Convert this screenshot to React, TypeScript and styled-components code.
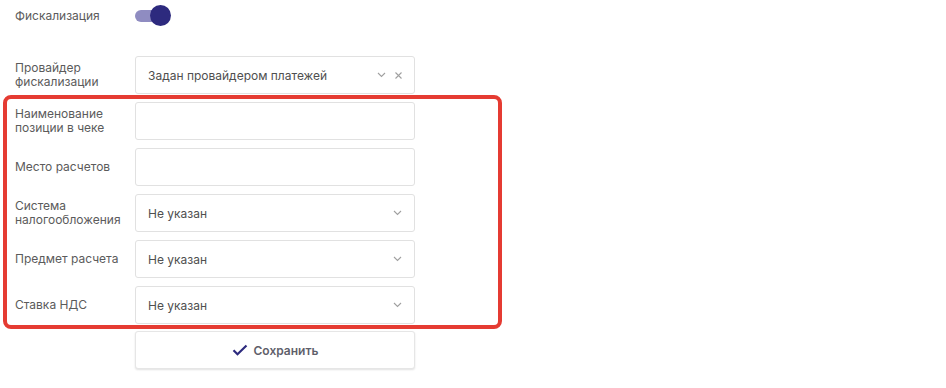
import React, { useState } from "react";
import styled, { createGlobalStyle } from "styled-components";

const GlobalStyle = createGlobalStyle`
  body {
    margin: 0;
    background: #ffffff;
    font-family: Inter, "Noto Sans", sans-serif;
  }
`;

const Page = styled.div`
  display: flex;
  flex-direction: column;
  padding: 6px 0 0 15px;
  width: 946px;
  height: 388px;
  box-sizing: border-box;
`;

const Row = styled.div<{ $mt?: number }>`
  display: grid;
  grid-template-columns: 120px 280px;
  align-items: center;
  min-height: 38px;
  margin-top: ${(p) => p.$mt ?? 8}px;
`;

const Label = styled.div`
  font-size: 12px;
  line-height: 14px;
  color: #5b5b5b;
`;

const Highlight = styled.div`
  display: flex;
  flex-direction: column;
  width: 499px;
  box-sizing: border-box;
  margin: 1px 0 2px -12px;
  padding: 3px 0 1px 8px;
  border: 4px solid #e53b32;
  border-radius: 8px;
`;

const Field = styled.div`
  height: 38px;
  box-sizing: border-box;
  border: 1px solid #e1e1e1;
  border-radius: 3px;
  background: #fff;
  display: flex;
  align-items: center;
  padding: 0 12px 0 12px;
  font-size: 12px;
  color: #4f4f4f;
`;

const Value = styled.span`
  flex: 1;
`;

const Icons = styled.span`
  display: flex;
  align-items: center;
  gap: 9px;
  color: #a0a0a0;
`;

const Switch = styled.button<{ $on: boolean }>`
  position: relative;
  width: 36px;
  height: 20px;
  padding: 0;
  border: none;
  background: none;
  cursor: pointer;

  &::before {
    content: "";
    position: absolute;
    left: 0;
    top: 4px;
    width: 32px;
    height: 12px;
    border-radius: 6px;
    background: ${(p) => (p.$on ? "#8f8cc1" : "#c7c7c7")};
  }
  &::after {
    content: "";
    position: absolute;
    top: -1px;
    left: ${(p) => (p.$on ? "15px" : "0")};
    width: 21px;
    height: 21px;
    border-radius: 50%;
    background: ${(p) => (p.$on ? "#2d2a7e" : "#f2f2f2")};
  }
`;

const SaveButton = styled.button`
  width: 280px;
  height: 38px;
  margin-left: 120px;
  box-sizing: border-box;
  border: 1px solid #e6e6e6;
  border-radius: 3px;
  background: #fff;
  box-shadow: 0 1px 2px rgba(0, 0, 0, 0.12);
  display: flex;
  align-items: center;
  justify-content: center;
  gap: 6px;
  font-family: Inter, "Noto Sans", sans-serif;
  font-size: 12px;
  font-weight: 600;
  color: #5f5f6b;
  cursor: pointer;
`;

const Chevron = () => (
  <svg width="9" height="6" viewBox="0 0 9 6" fill="none">
    <path d="M1 1l3.5 3.5L8 1" stroke="currentColor" strokeWidth="1.1" />
  </svg>
);

const Cross = () => (
  <svg width="7" height="7" viewBox="0 0 7 7" fill="none">
    <path d="M0.5 0.5l6 6M6.5 0.5l-6 6" stroke="currentColor" strokeWidth="1.1" />
  </svg>
);

const Check = () => (
  <svg width="16" height="12" viewBox="0 0 16 12" fill="none">
    <path d="M1.5 6.2l4 4L14.5 1.5" stroke="#2d2a7e" strokeWidth="2.2" />
  </svg>
);

const selects = [
  { label: "Система налогообложения", value: "Не указан" },
  { label: "Предмет расчета", value: "Не указан" },
  { label: "Ставка НДС", value: "Не указан" },
];

function App() {
  const [fiscal, setFiscal] = useState(true);

  return (
    <Page>
      <GlobalStyle />
      <Row $mt={0} style={{ minHeight: 20 }}>
        <Label>Фискализация</Label>
        <Switch $on={fiscal} onClick={() => setFiscal(!fiscal)} />
      </Row>

      <Row $mt={30}>
        <Label>
          Провайдер
          <br />
          фискализации
        </Label>
        <Field>
          <Value>Задан провайдером платежей</Value>
          <Icons>
            <Chevron />
            <Cross />
          </Icons>
        </Field>
      </Row>

      <Highlight>
        <Row $mt={0}>
          <Label>
            Наименование
            <br />
            позиции в чеке
          </Label>
          <Field />
        </Row>
        <Row>
          <Label>Место расчетов</Label>
          <Field />
        </Row>
        {selects.map((s) => (
          <Row key={s.label}>
            <Label>{s.label}</Label>
            <Field>
              <Value>{s.value}</Value>
              <Icons>
                <Chevron />
              </Icons>
            </Field>
          </Row>
        ))}
      </Highlight>

      <SaveButton>
        <Check />
        Сохранить
      </SaveButton>
    </Page>
  );
}

export default App;
